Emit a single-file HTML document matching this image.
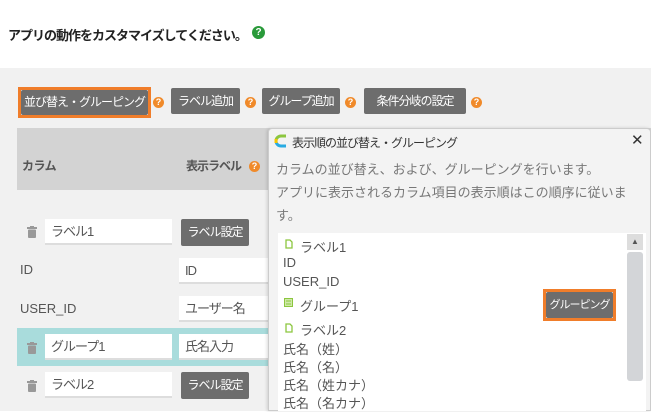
<!DOCTYPE html>
<html><head><meta charset="utf-8"><style>
*{margin:0;padding:0;box-sizing:border-box}
body{width:651px;height:411px;overflow:hidden;background:#fff;font-family:"Liberation Sans","Noto Sans CJK JP",sans-serif;position:relative;color:#555}
.a{position:absolute;white-space:nowrap}
.btn{position:absolute;background:#6d6d6d;color:#fff;font-size:12px;letter-spacing:-1px;border-radius:2px;text-align:center;line-height:26px;height:26px;white-space:nowrap;overflow:hidden}
.ob{position:absolute;border:3px solid #f07d2a}
.q{position:absolute;width:11px;height:11px;border-radius:50%;background:#f08a2a;color:#fff;font-size:9px;font-weight:bold;text-align:center;line-height:11px}
.inp{position:absolute;background:#fff;border-bottom:2px solid #ddd;font-size:13px;letter-spacing:-1px;color:#555;padding-left:6px;line-height:25px;height:26px;white-space:nowrap}
.tr{position:absolute;width:10px;height:12px}
.li{position:absolute;left:283px;font-size:13px;color:#555;white-space:nowrap}
</style></head><body>
<div class="a" style="left:8px;top:25px;font-size:13px;color:#222;letter-spacing:-1px;font-weight:bold">アプリの動作をカスタマイズしてください。</div>
<div class="a" style="left:252px;top:26px;width:13px;height:13px;border-radius:50%;background:#2a9a3a;color:#fff;font-size:10px;font-weight:bold;text-align:center;line-height:13px">?</div>
<div class="a" style="left:0;top:68px;width:651px;height:343px;background:#f1f1f1"></div>
<div class="ob" style="left:18px;top:87px;width:133px;height:31px"></div>
<div class="btn" style="left:21px;top:90px;width:127px;height:25px;line-height:25px">並び替え・グルーピング</div>
<div class="q" style="left:153px;top:97px">?</div>
<div class="btn" style="left:171px;top:88px;width:69px">ラベル追加</div>
<div class="q" style="left:245px;top:97px">?</div>
<div class="btn" style="left:262px;top:88px;width:78px">グループ追加</div>
<div class="q" style="left:345px;top:97px">?</div>
<div class="btn" style="left:364px;top:88px;width:102px">条件分岐の設定</div>
<div class="q" style="left:471px;top:97px">?</div>
<div class="a" style="left:17px;top:128px;width:634px;height:62px;background:#d3d3d3"></div>
<div class="a" style="left:22px;top:157px;font-size:12px;font-weight:bold;color:#555;letter-spacing:-0.5px">カラム</div>
<div class="a" style="left:186px;top:157px;font-size:12px;font-weight:bold;color:#555;letter-spacing:-1px">表示ラベル</div>
<div class="q" style="left:249px;top:161px">?</div>
<svg class="tr" style="left:27px;top:226px" viewBox="0 0 10 12"><rect x="0" y="1" width="10" height="2" fill="#999"/><rect x="3" y="0" width="4" height="2" fill="#999"/><rect x="1" y="3.5" width="8" height="8.5" rx="1" fill="#999"/></svg>
<div class="inp" style="left:45px;top:219px;width:127px">ラベル1</div>
<div class="btn" style="left:181px;top:219px;width:68px;height:27px;line-height:27px">ラベル設定</div>
<div class="a" style="left:20px;top:262px;font-size:13px">ID</div>
<div class="inp" style="left:179px;top:258px;width:89px">ID</div>
<div class="a" style="left:20px;top:301px;font-size:13px">USER_ID</div>
<div class="inp" style="left:179px;top:296px;width:89px">ユーザー名</div>
<div class="a" style="left:17px;top:328px;width:251px;height:38px;background:#a9dcdc"></div>
<svg class="tr" style="left:27px;top:342px" viewBox="0 0 10 12"><rect x="0" y="1" width="10" height="2" fill="#999"/><rect x="3" y="0" width="4" height="2" fill="#999"/><rect x="1" y="3.5" width="8" height="8.5" rx="1" fill="#999"/></svg>
<div class="inp" style="left:45px;top:334px;width:127px">グループ1</div>
<div class="inp" style="left:179px;top:334px;width:89px">氏名入力</div>
<svg class="tr" style="left:27px;top:380px" viewBox="0 0 10 12"><rect x="0" y="1" width="10" height="2" fill="#999"/><rect x="3" y="0" width="4" height="2" fill="#999"/><rect x="1" y="3.5" width="8" height="8.5" rx="1" fill="#999"/></svg>
<div class="inp" style="left:45px;top:372px;width:127px">ラベル2</div>
<div class="btn" style="left:181px;top:372px;width:68px;height:27px;line-height:27px">ラベル設定</div>

<div class="a" style="left:268px;top:128px;width:383px;height:283px;background:#f3f3f3;border:1px solid #ccc;border-radius:4px 4px 0 0;box-shadow:-1px 0 3px rgba(0,0,0,.15)"></div>
<svg class="a" style="left:274px;top:134px" width="14" height="14" viewBox="0 0 14 14"><path d="M2 7 A5 5 0 0 1 7 2 H12" stroke="#8cc63f" stroke-width="3" fill="none"/><path d="M2 7 A5 5 0 0 0 7 12 H12" stroke="#29abe2" stroke-width="3" fill="none"/><path d="M2 5 V9" stroke="#f7c600" stroke-width="3"/></svg>
<div class="a" style="left:292px;top:134px;font-size:12px;color:#333;letter-spacing:-1px">表示順の並び替え・グルーピング</div>
<div class="a" style="left:631px;top:131px;font-size:15px;color:#333">✕</div>
<div class="a" style="left:276px;top:159px;font-size:13px;color:#777">カラムの並び替え、および、グルーピングを行います。</div>
<div class="a" style="left:276px;top:182px;font-size:13px;color:#777">アプリに表示されるカラム項目の表示順はこの順序に従いま</div>
<div class="a" style="left:276px;top:205px;font-size:13px;color:#777">す。</div>
<div class="a" style="left:278px;top:233px;width:368px;height:178px;background:#fff"></div>
<div class="a" style="left:627px;top:234px;width:16px;height:16px;background:#ddd;color:#555;font-size:8px;text-align:center;line-height:16px">▲</div>
<div class="a" style="left:627px;top:252px;width:16px;height:129px;background:#d3d5d8;border-radius:3px"></div>
<svg class="a" style="left:285px;top:239px" width="8" height="10"><path d="M1 1H5L7 3V9H1Z" fill="none" stroke="#8cc63f" stroke-width="1.3"/></svg>
<div class="li" style="left:300px;top:237px">ラベル1</div>
<div class="li" style="top:255px">ID</div>
<div class="li" style="top:274px">USER_ID</div>
<svg class="a" style="left:284px;top:298px" width="9" height="9"><rect x=".5" y=".5" width="8" height="8" fill="#cfe9a9" stroke="#8cc63f"/><path d="M2 3H7M2 6H7" stroke="#8cc63f"/></svg>
<div class="li" style="left:300px;top:296px">グループ1</div>
<div class="ob" style="left:543px;top:289px;width:73px;height:32px"></div>
<div class="btn" style="left:546px;top:292px;width:67px;height:26px;font-size:11px">グルーピング</div>
<svg class="a" style="left:285px;top:323px" width="8" height="10"><path d="M1 1H5L7 3V9H1Z" fill="none" stroke="#8cc63f" stroke-width="1.3"/></svg>
<div class="li" style="left:300px;top:320px">ラベル2</div>
<div class="li" style="top:339px">氏名（姓）</div>
<div class="li" style="top:357px">氏名（名）</div>
<div class="li" style="top:375px">氏名（姓カナ）</div>
<div class="li" style="top:393px">氏名（名カナ）</div>
</body></html>
